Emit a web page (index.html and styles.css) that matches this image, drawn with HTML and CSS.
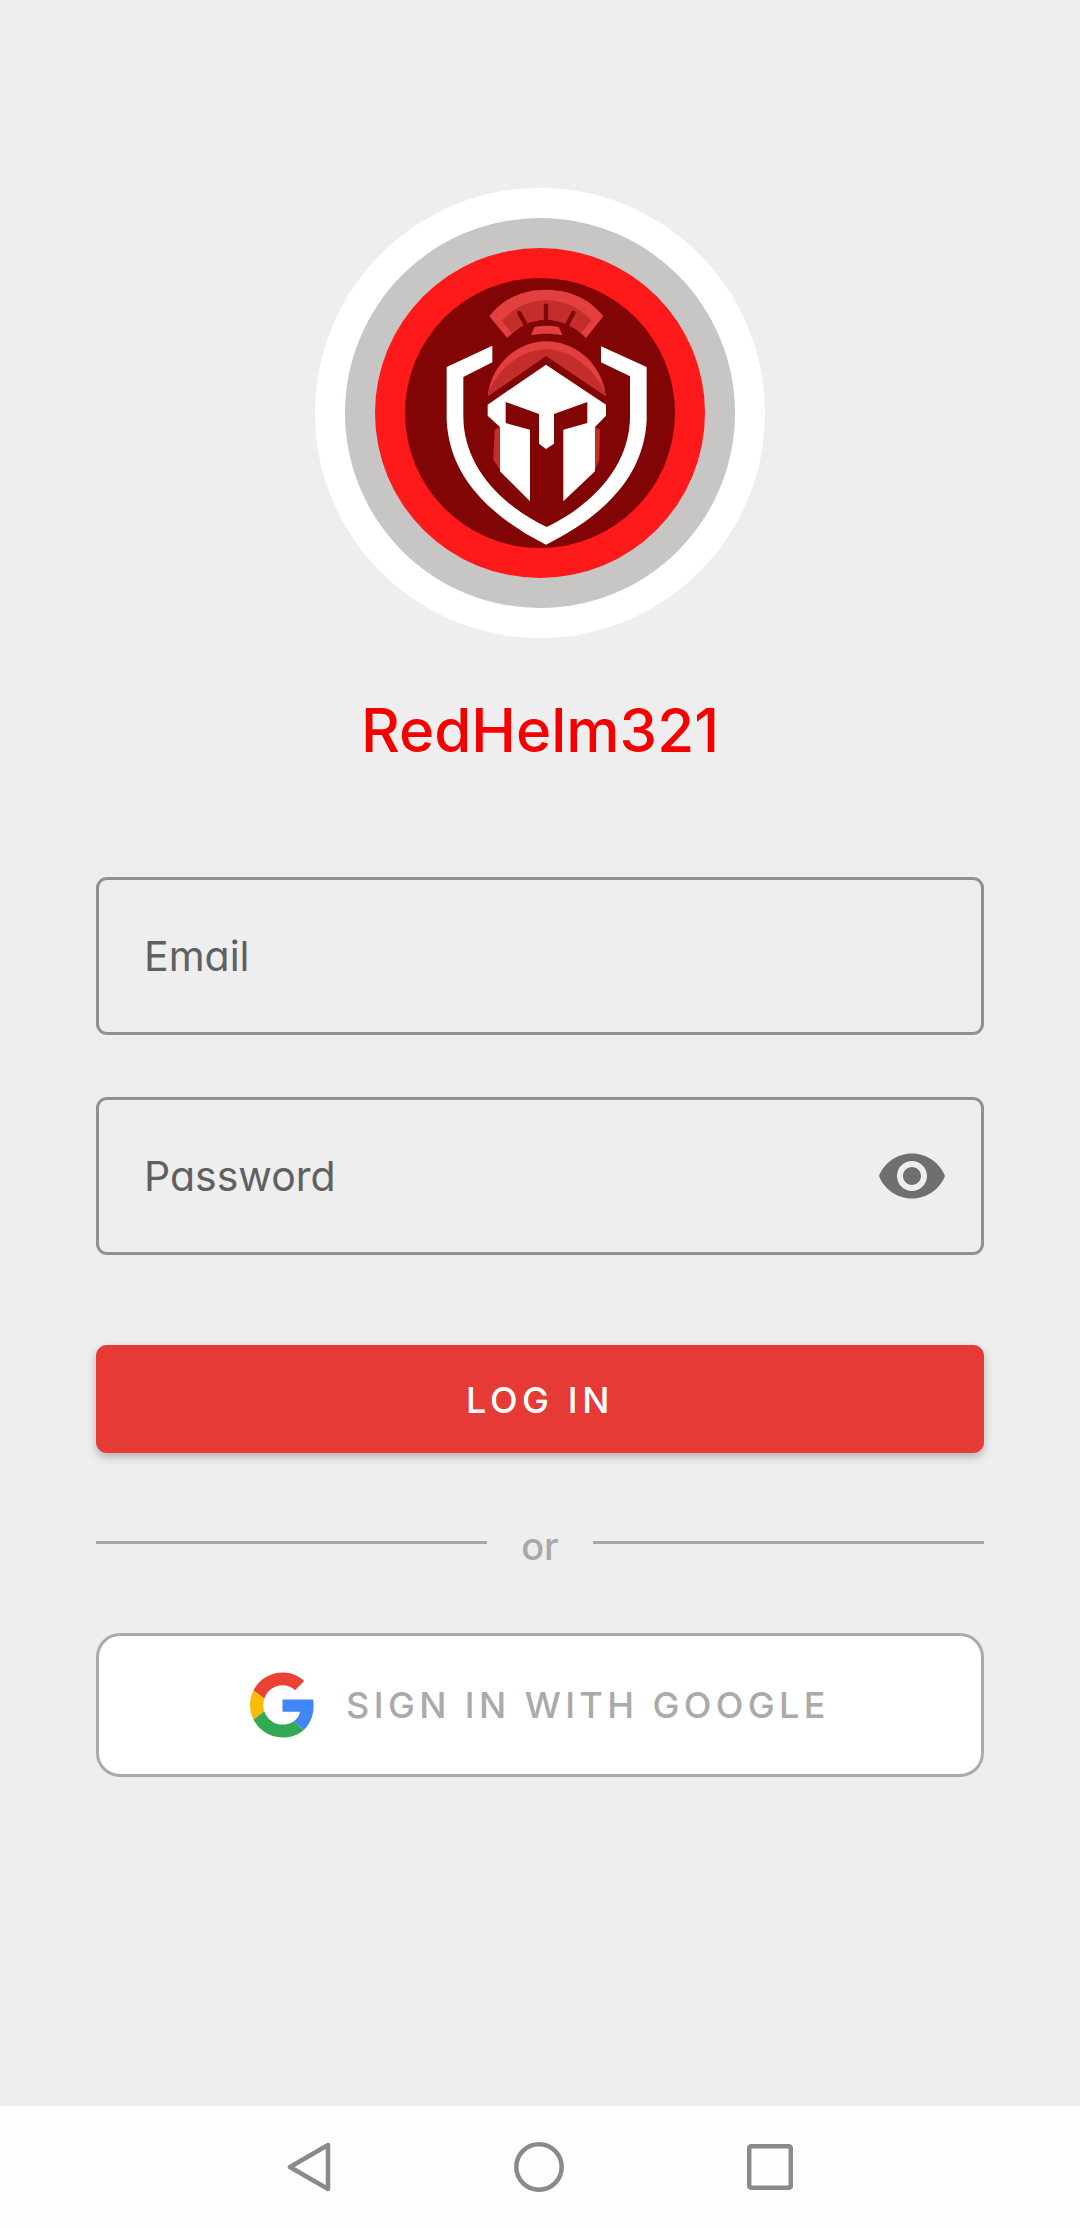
FILE: index.html
```html
<!DOCTYPE html>
<html lang="en">
<head>
  <meta charset="UTF-8">
  <meta name="viewport" content="width=device-width, initial-scale=1.0">
  <title>RedHelm321</title>
  <link rel="stylesheet" href="styles.css">
</head>
<body>
  <main class="login">
    <svg class="logo" viewBox="45 55 1350 1350" xmlns="http://www.w3.org/2000/svg">
      <circle cx="720" cy="730" r="675" fill="#fff"/>
      <circle cx="720" cy="730" r="585" fill="#c8c5c5"/>
      <circle cx="720" cy="730" r="495" fill="#fe1a1a"/>
      <circle cx="720" cy="730" r="405" fill="#800504"/>
      <!-- plume -->
      <path fill="#e23f3e" d="M568 440C610 385 670 360 738 360C806 360 868 385 910 440L858 505C825 470 785 450 738 450C692 450 655 470 622 505Z"/>
      <path fill="#c32e2c" d="M606 452C645 412 690 392 738 392C790 392 835 412 874 452L844 490C815 464 780 450 738 450C695 450 662 464 634 490Z"/>
      <path fill="none" stroke="#800504" stroke-width="13" stroke-linecap="round" d="M658 430L676 464M738 408V450M820 430L802 464"/>
      <path fill="#e23f3e" d="M693 497L703 473C725 467 755 467 777 473L787 497C755 491 725 491 693 497Z"/>
      <!-- dome -->
      <path fill="#e23f3e" d="M563 680C575 575 660 515 738 515C820 515 905 575 918 680L738 558Z"/>
      <path fill="#c32e2c" d="M563 680C567 660 574 645 584 632C625 570 685 540 738 538C795 540 850 570 895 632C905 645 914 660 918 680L738 558Z"/>
      <!-- cheek strips -->
      <path fill="#c32e2c" d="M600 772L584 780L580 870L600 900Z"/>
      <path fill="#c32e2c" d="M885 772L900 780L898 870L885 900Z"/>
      <!-- shield -->
      <path fill="#fff" d="M577 528V578L490 622V740C490 880 590 1000 740 1072C890 1000 990 880 990 740V620L903 578V530L1040 592V750C1035 870 970 1010 738 1125C510 1010 445 870 440 750V592Z"/>
      <!-- helmet -->
      <path fill="#fff" d="M738 585L918 705V738L885 772V905L790 995V780L862 760V697L762 733V822L738 838L717 822V733L617 697V760L690 780V995L600 905V772L563 738V705Z"/>
    </svg>

    <h1 class="brand">RedHelm321</h1>

    <form class="form">
      <input class="field" type="text" placeholder="Email">
      <div class="password">
        <input class="field" type="password" placeholder="Password">
        <svg class="eye" viewBox="0 0 24 24" xmlns="http://www.w3.org/2000/svg">
          <path fill="#6f6f6f" d="M12 4.5C7 4.5 2.73 7.61 1 12c1.73 4.39 6 7.5 11 7.5s9.27-3.11 11-7.5c-1.73-4.39-6-7.5-11-7.5zM12 17c-2.76 0-5-2.24-5-5s2.24-5 5-5 5 2.24 5 5-2.24 5-5 5zm0-8c-1.66 0-3 1.34-3 3s1.34 3 3 3 3-1.34 3-3-1.34-3-3-3z"/>
        </svg>
      </div>
      <button class="btn-login" type="button">LOG IN</button>
      <div class="divider"><span>or</span></div>
      <button class="btn-google" type="button">
        <svg class="g-logo" viewBox="0 0 48 48" xmlns="http://www.w3.org/2000/svg">
          <path fill="#EA4335" d="M24 9.5c3.54 0 6.71 1.22 9.21 3.6l6.85-6.85C35.9 2.38 30.47 0 24 0 14.62 0 6.51 5.38 2.56 13.22l7.98 6.19C12.43 13.72 17.74 9.5 24 9.5z"/>
          <path fill="#4285F4" d="M46.98 24.55c0-1.57-.15-3.09-.38-4.55H24v9.02h12.94c-.58 2.96-2.26 5.48-4.78 7.18l7.73 6c4.51-4.18 7.09-10.36 7.09-17.65z"/>
          <path fill="#FBBC05" d="M10.53 28.59c-.48-1.45-.76-2.99-.76-4.59s.27-3.14.76-4.59l-7.98-6.19C.92 16.46 0 20.12 0 24c0 3.88.92 7.54 2.56 10.78l7.97-6.19z"/>
          <path fill="#34A853" d="M24 48c6.48 0 11.93-2.13 15.89-5.81l-7.73-6c-2.15 1.45-4.92 2.3-8.16 2.3-6.26 0-11.57-4.22-13.47-9.91l-7.98 6.19C6.51 42.62 14.62 48 24 48z"/>
        </svg>
        <span>SIGN IN WITH GOOGLE</span>
      </button>
    </form>
  </main>

  <nav class="navbar">
    <svg class="nav-back" viewBox="0 0 44 50" xmlns="http://www.w3.org/2000/svg">
      <path fill="none" stroke="#8a8a8a" stroke-width="4.5" stroke-linejoin="round" d="M41 3V47L3 25Z"/>
    </svg>
    <svg class="nav-home" viewBox="0 0 50 50" xmlns="http://www.w3.org/2000/svg">
      <circle cx="25" cy="25" r="22.7" fill="none" stroke="#8a8a8a" stroke-width="4.5"/>
    </svg>
    <svg class="nav-recent" viewBox="0 0 46 46" xmlns="http://www.w3.org/2000/svg">
      <rect x="2.2" y="2.2" width="41.6" height="41.6" rx="2" fill="none" stroke="#8a8a8a" stroke-width="4.5"/>
    </svg>
  </nav>
</body>
</html>
```

FILE: styles.css
```css
body {
  margin: 0;
  height: 2228px;
  display: flex;
  flex-direction: column;
  background-color: #eeeeee;
  font-family: Inter, "Noto Sans", sans-serif;
  font-feature-settings: "cv11" 1;
}
.login {
  flex: 1;
  display: flex;
  flex-direction: column;
  align-items: center;
  padding: 188px 96px 0;
}
.logo {
  width: 450px;
  height: 450px;
  display: block;
}
.brand {
  margin: 56px 0 0;
  font-size: 60px;
  line-height: 72px;
  font-weight: 500;
  color: #f40000;
}
.form {
  width: 888px;
  margin-top: 111px;
  display: flex;
  flex-direction: column;
}
.field {
  display: block;
  width: 100%;
  height: 158px;
  box-sizing: border-box;
  padding: 0 45px;
  background: transparent;
  border: 3px solid #919191;
  border-radius: 11px;
  font-family: inherit;
  font-feature-settings: inherit;
  font-size: 41px;
  font-weight: 430;
  color: #606060;
  outline: none;
}
.field::placeholder {
  color: #606060;
  opacity: 1;
}
.password {
  position: relative;
  margin-top: 62px;
}
.eye {
  position: absolute;
  right: 36px;
  top: 43px;
  width: 72px;
  height: 72px;
}
.btn-login {
  margin-top: 90px;
  height: 108px;
  padding-top: 3px;
  border: none;
  border-radius: 11px;
  background-color: #e53a36;
  box-shadow: 0 4px 8px rgba(0, 0, 0, 0.25);
  color: #fff;
  font-family: inherit;
  font-size: 36px;
  font-weight: 500;
  letter-spacing: 4.6px;
}
.divider {
  margin-top: 64px;
  height: 50px;
  display: flex;
  align-items: flex-start;
  gap: 34px;
  color: #a9a7a7;
  font-size: 38px;
  font-weight: 450;
  line-height: 58px;
}
.divider::before,
.divider::after {
  content: "";
  flex: 1;
  height: 3px;
  margin-top: 24px;
  background-color: #a9a7a7;
}
.btn-google {
  margin-top: 66px;
  height: 144px;
  display: flex;
  align-items: center;
  justify-content: center;
  gap: 31px;
  background: #fff;
  border: 3px solid #aba9a9;
  border-radius: 24px;
  color: #aba9a9;
  font-family: inherit;
  font-feature-settings: inherit;
  font-size: 36px;
  font-weight: 500;
  letter-spacing: 4.4px;
}
.g-logo {
  width: 65px;
  height: 66px;
}
.navbar {
  height: 122px;
  background-color: #fdfdfd;
  display: flex;
  align-items: center;
  justify-content: center;
  gap: 183px;
}
.nav-back {
  width: 44px;
  height: 50px;
}
.nav-home {
  width: 50px;
  height: 50px;
}
.nav-recent {
  width: 46px;
  height: 46px;
}
```
